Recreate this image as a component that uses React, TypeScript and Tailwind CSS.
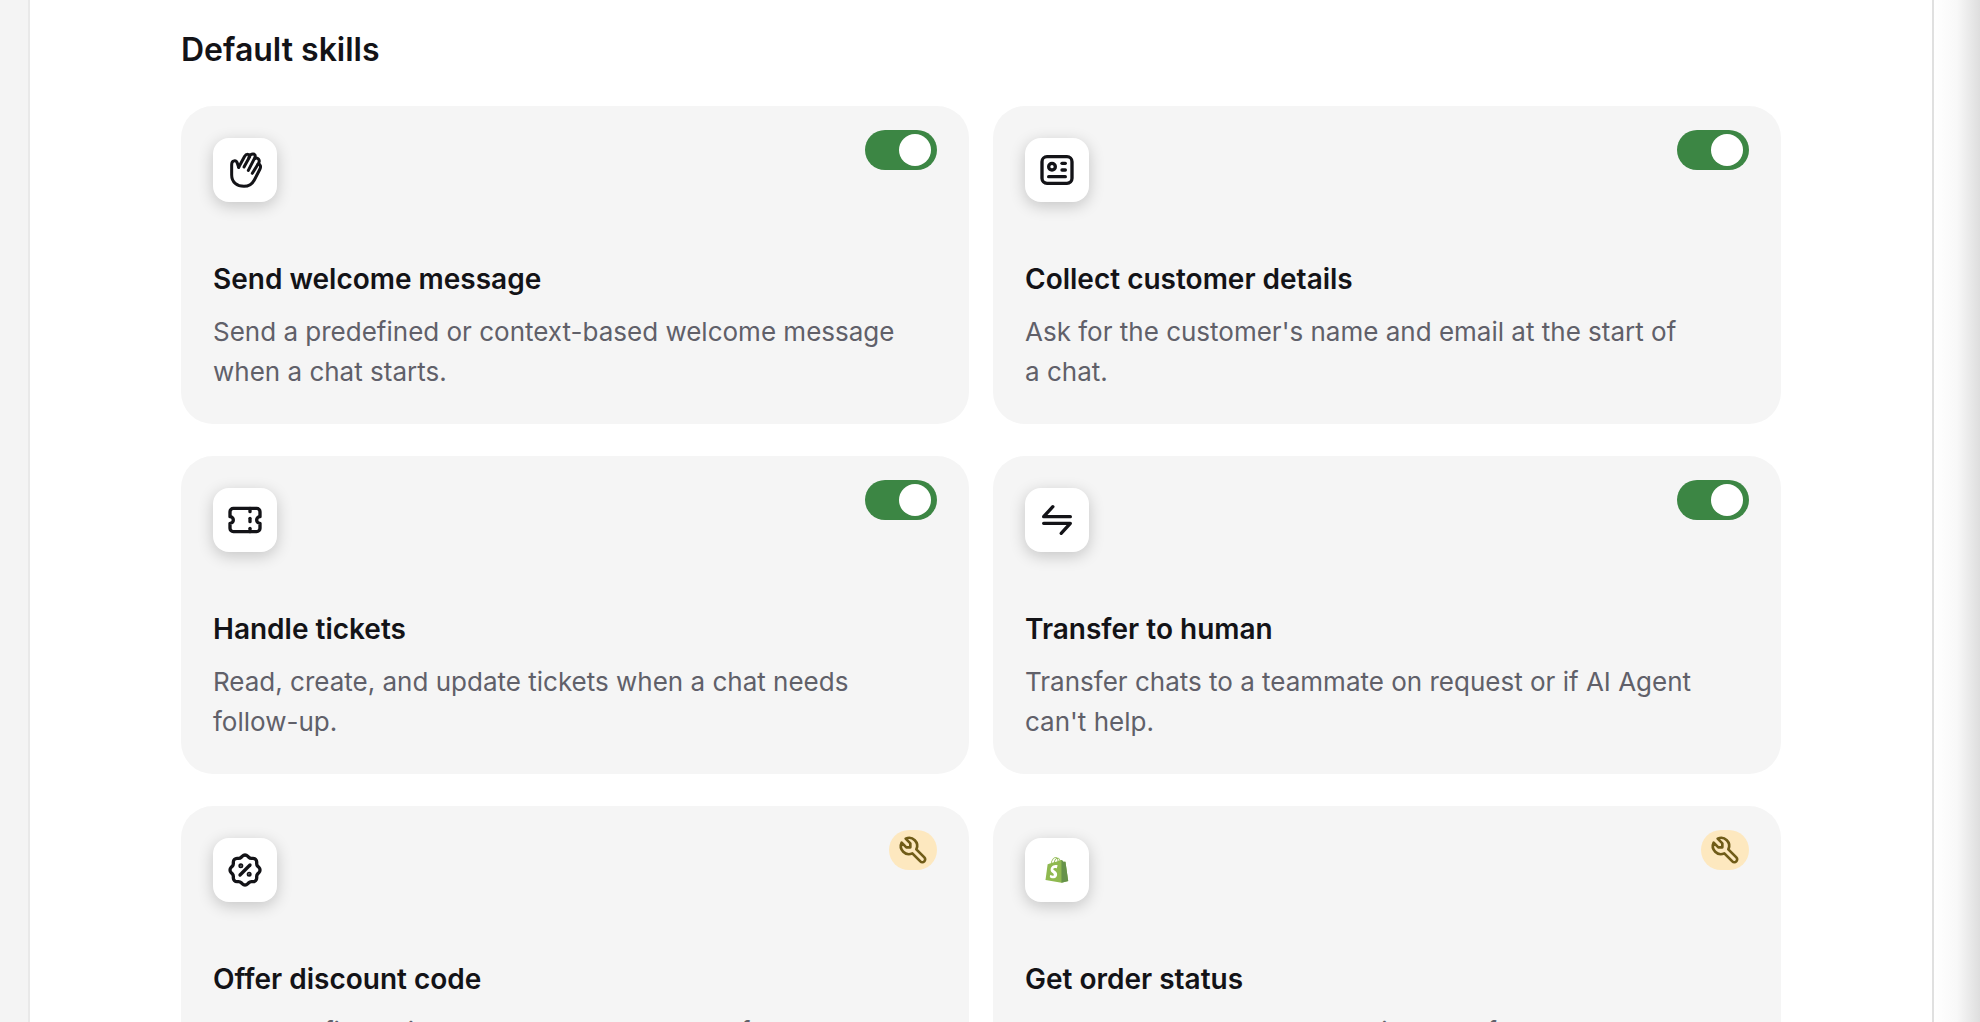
import type { ReactNode } from "react";
import { TbId, TbRosetteDiscount, TbTicket, TbTool, TbTransfer } from "react-icons/tb";

type Skill = {
  id: string;
  title: string;
  description: string;
  icon: ReactNode;
  enabled?: boolean;
};

const HandIcon = () => (
  <svg
    width="64"
    height="64"
    viewBox="0 0 192 192"
    fill="none"
    stroke="currentColor"
    strokeWidth="9"
    strokeLinecap="round"
    strokeLinejoin="round"
  >
    <path d="M77 88L95 55C99 47 112 47 110 56L93 87" />
    <path d="M108 57C113 45 130 45 126 58L106 97" />
    <path d="M125 62C134 56 142 66 137 75L118 106" />
    <path d="M135 79C143 78 144 86 141 93L124 126C117 139 107 145 93 145C72 145 56 133 56 111V80C56 66 70 65 73 76L77 88" />
  </svg>
);

const ShopifyIcon = () => (
  <svg width="24" height="26" viewBox="0 0 110 125">
    <path
      fill="#8fb950"
      d="M95.900 23.900c-.1-.6-.6-1-1.100-1-.5 0-9.300-.2-9.300-.2s-7.400-7.200-8.100-7.900c-.7-.7-2.200-.5-2.700-.3 0 0-1.400.4-3.700 1.100-.4-1.300-1-2.800-1.800-4.400-2.600-5-6.500-7.700-11.100-7.700-.3 0-.6 0-1 .1-.1-.2-.3-.3-.4-.5-2-2.200-4.600-3.200-7.700-3.100-6 .2-12 4.500-16.800 12.200-3.400 5.400-6 12.200-6.800 17.500-6.900 2.100-11.700 3.600-11.800 3.700-3.500 1.100-3.600 1.200-4 4.500-.3 2.500-9.500 73-9.500 73l76.400 13.200 33.100-8.200S96 24.500 95.900 23.900zM67.200 16.800c-1.800.5-3.800 1.200-5.900 1.800 0-3-.4-7.300-1.800-10.900 4.500.9 6.700 6 7.700 9.100zM57.200 19.900c-4 1.200-8.400 2.600-12.800 3.900 1.200-4.700 3.600-9.400 6.400-12.500 1.100-1.100 2.600-2.400 4.300-3.200 1.800 3.500 2.200 8.400 2.100 11.800zM49.100 4c1.400 0 2.600.3 3.600.9-1.600.8-3.200 2.100-4.700 3.600-3.800 4.100-6.700 10.500-7.900 16.600-3.600 1.100-7.200 2.200-10.500 3.200 2.100-9.500 10.200-24 19.500-24.300z"
    />
    <path
      fill="#66924a"
      d="M94.800 22.900c-.5 0-9.300-.2-9.300-.2s-7.400-7.200-8.100-7.900c-.3-.3-.6-.4-1-.5v109.700l33.100-8.200S96 24.500 95.900 23.900c-.1-.6-.6-1-1.100-1z"
    />
    <path
      fill="#fff"
      d="M58 39.900l-3.800 14.400s-4.300-2-9.400-1.600c-7.500.5-7.500 5.200-7.500 6.400.4 6.400 17.300 7.800 18.300 22.900.7 11.900-6.300 20-16.400 20.600-12.200.8-18.900-6.400-18.900-6.400l2.600-11s6.700 5.100 12.100 4.700c3.500-.2 4.800-3.100 4.700-5.100-.5-8.400-14.300-7.900-15.200-21.700-.7-11.600 6.900-23.400 23.700-24.400 6.500-.5 9.800 1.200 9.800 1.200z"
    />
  </svg>
);

const skills: Skill[] = [
  {
    id: "welcome",
    title: "Send welcome message",
    description: "Send a predefined or context-based welcome message when a chat starts.",
    icon: <HandIcon />,
    enabled: true,
  },
  {
    id: "details",
    title: "Collect customer details",
    description: "Ask for the customer's name and email at the start of a\u00a0chat.",
    icon: <TbId size={40} />,
    enabled: true,
  },
  {
    id: "tickets",
    title: "Handle tickets",
    description: "Read, create, and update tickets when a chat needs follow-up.",
    icon: <TbTicket size={40} />,
    enabled: true,
  },
  {
    id: "transfer",
    title: "Transfer to human",
    description: "Transfer chats to a teammate on request or if AI Agent can't help.",
    icon: <TbTransfer size={40} />,
    enabled: true,
  },
  {
    id: "discount",
    title: "Offer discount code",
    description: "Create a fixed discount and send the code for customers.",
    icon: <TbRosetteDiscount size={40} />,
  },
  {
    id: "order",
    title: "Get order status",
    description: "Check order status and tracking data for customers.",
    icon: <ShopifyIcon />,
  },
];

const Toggle = ({ label }: { label: string }) => (
  <input
    type="checkbox"
    role="switch"
    aria-label={label}
    defaultChecked
    className="flex h-10 w-[72px] shrink-0 cursor-pointer appearance-none items-center rounded-full bg-gray-400 px-1.5 before:size-8 before:rounded-full before:bg-white checked:justify-end checked:bg-[#3c8644]"
  />
);

const SetupButton = ({ label }: { label: string }) => (
  <button
    type="button"
    aria-label={label}
    className="flex h-10 w-12 shrink-0 items-center justify-center rounded-full bg-[#fde8bf] text-[#705c18]"
  >
    <TbTool size={32} />
  </button>
);

const SkillCard = ({ skill }: { skill: Skill }) => (
  <article className="rounded-[32px] bg-[#f5f5f5] px-8 pt-6 pb-8">
    <div className="flex items-start justify-between">
      <div className="mt-2 flex size-16 items-center justify-center rounded-2xl bg-white shadow-[0_4px_16px_rgba(0,0,0,0.2)]">
        {skill.icon}
      </div>
      {skill.enabled ? (
        <Toggle label={skill.title} />
      ) : (
        <SetupButton label={`Set up ${skill.title}`} />
      )}
    </div>
    <h3 className="mt-[57px] text-[28px] leading-10 font-semibold">{skill.title}</h3>
    <p className="mt-[13px] pr-10 text-[26px] leading-10 text-[#606069]">{skill.description}</p>
  </article>
);

export default function App() {
  return (
    <div className="flex h-screen overflow-hidden bg-white font-[Inter,sans-serif] text-[#131317]">
      <div className="w-[30px] shrink-0 border-r-2 border-[#e9e9e9] bg-[#f4f4f4]" />
      <main className="min-w-0 flex-1 overflow-hidden">
        <div className="mx-auto max-w-[1600px] pt-[30px]">
          <h2 className="mb-9 text-[32px] leading-10 font-semibold">Default skills</h2>
          <div className="grid grid-cols-2 gap-x-6 gap-y-8">
            {skills.map((skill) => (
              <SkillCard key={skill.id} skill={skill} />
            ))}
          </div>
        </div>
      </main>
      <div className="w-12 shrink-0 border-l-2 border-[#e0e0e0] bg-linear-to-r from-white via-[#f8f8f8] to-[#dedede]" />
    </div>
  );
}
